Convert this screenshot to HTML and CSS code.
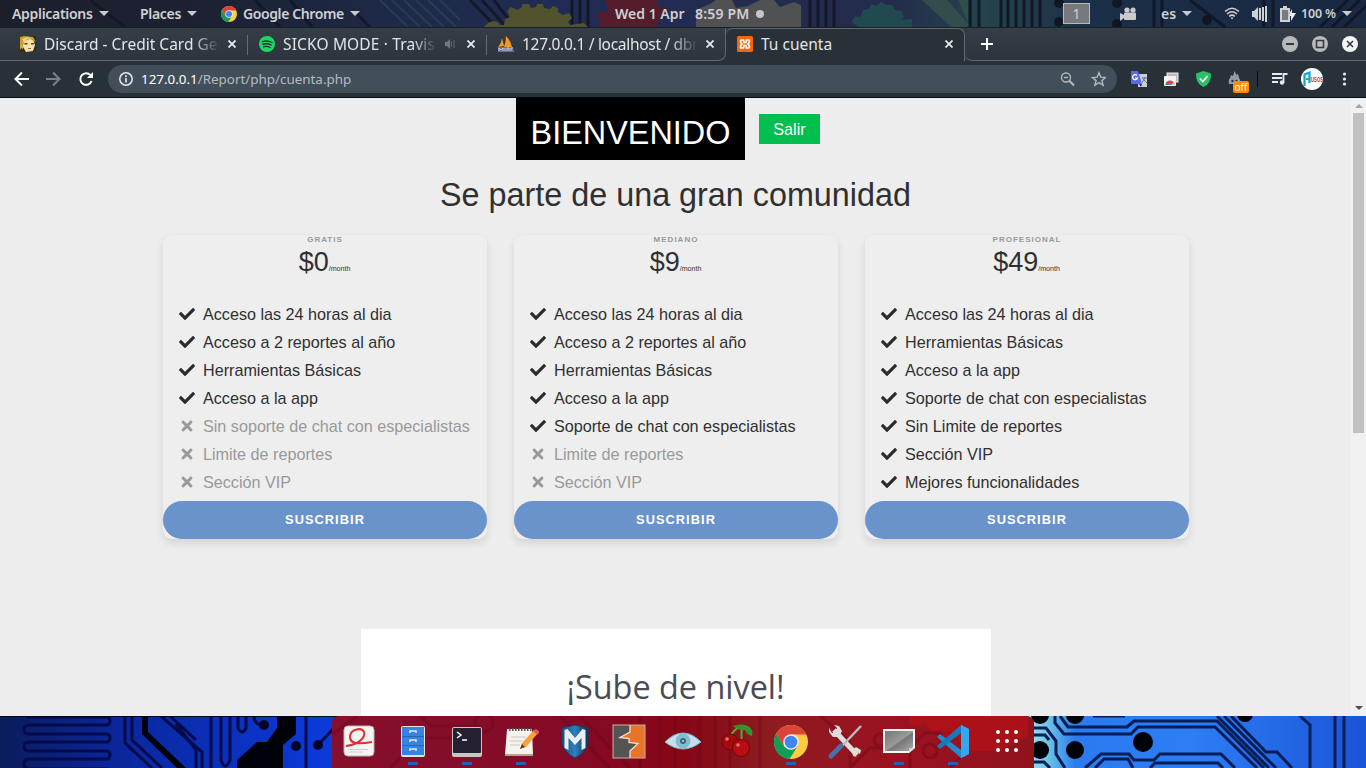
FILE: index.html
```html
<!DOCTYPE html>
<html lang="es">
<head>
<meta charset="utf-8">
<title>Tu cuenta</title>
<link rel="stylesheet" href="styles.css">
</head>
<body>
<svg class="defs" width="0" height="0">
  <defs>
    <symbol id="check" viewBox="0 0 512 512"><path d="M173.9 439.4L7.5 273c-10-10-10-26.200 0-36.200l36.200-36.200c10-10 26.200-10 36.200 0L192 312.700 432.100 72.600c10-10 26.200-10 36.200 0l36.200 36.200c10 10 10 26.200 0 36.200L210.100 439.400c-10 10-26.200 10-36.200 0z"/></symbol>
    <symbol id="times" viewBox="0 0 352 512"><path d="M242.700 256l100.100-100.100c12.300-12.300 12.300-32.200 0-44.500l-22.200-22.200c-12.300-12.300-32.200-12.300-44.500 0L176 189.300 75.900 89.200c-12.300-12.300-32.200-12.300-44.500 0L9.200 111.400c-12.300 12.300-12.300 32.200 0 44.500L109.300 256 9.200 356.100c-12.300 12.300-12.300 32.200 0 44.500l22.200 22.200c12.300 12.300 32.200 12.300 44.500 0L176 322.700l100.100 100.100c12.300 12.300 32.200 12.300 44.500 0l22.200-22.200c12.300-12.300 12.300-32.200 0-44.500z"/></symbol>
    <symbol id="x" viewBox="0 0 8 8"><path d="M.5.5l7 7M7.500.5l-7 7" stroke="currentColor" stroke-width="1.700"/></symbol>
    <symbol id="chrome" viewBox="0 0 48 48">
      <circle cx="24" cy="24" r="24" fill="#fc4"/>
      <path d="M3.200 12A24 24 0 0 1 44.800 12L46 13.500H24L13.500 30z" fill="#db4437"/>
      <path d="M3.200 12A24 24 0 0 0 22 48L33.500 29.500 24 34 13.600 30z" fill="#0f9d58"/>
      <circle cx="24" cy="24" r="11" fill="#f1f1f1"/><circle cx="24" cy="24" r="9" fill="#4285f4"/>
    </symbol>
  </defs>
</svg>

<header class="topbar">
  <svg class="wall" width="1366" height="27" viewBox="0 0 1366 27">
    <defs><linearGradient id="tb"><stop offset="0" stop-color="#1c1f2b"/><stop offset=".15" stop-color="#1c2133"/><stop offset=".3" stop-color="#1d2a49"/><stop offset=".42" stop-color="#222b55"/><stop offset=".65" stop-color="#242b4b"/><stop offset=".72" stop-color="#25434c"/><stop offset=".8" stop-color="#1c2f48"/><stop offset="1" stop-color="#182842"/></linearGradient></defs>
    <rect width="1366" height="27" fill="url(#tb)"/>
    <g fill="none" stroke="#141927" stroke-width="3"><path d="M90 0l35 27M255 0l25 27M290 0l22 27M355 12l15 15M470 0l26 27M482 0l24 27M494 0l20 27M572 0v27M580 0v27M588 0v27M810 0v27M818 0v27M826 0v27M834 0v27"/></g>
    <g fill="none" stroke="#294b53" stroke-width="2" opacity=".6"><path d="M380 0l28 27M392 0l28 27M404 0l28 27M416 0l28 27M428 0l28 27M440 0l20 20"/></g>
    <path d="M484 27q6-8 14-5l2 3h4l1-6 5-2-3-6 4-4 6 3 5-3v-3h7l2 4 5-1 1-3h6l1 4 6 1 3-3 5 2v4l5 3 6-2 3 5-4 4 2 3 14-2 4 4z" fill="#50532e"/>
    <path d="M598 27l3-6-4-5 4-5 6 1V5l-3-5h53l1 6 7 2-1 6-5 2 1 5-5 6z" fill="#551d2b"/>
    <path d="M696 27V10l14-6 6-4h16l4 8 12-2 12-6h14l6 7 14-5 7 3v22z" fill="#505153"/>
    <path d="M858 27l-6-5 3-6 5 1 3-7 6-1 2-5 5 2 5-4 6 3 5 0 3 5 6 1 3 6-2 3 10-1v8z" fill="#204a50"/>
    <path d="M922 0h25l24 27h-20zM958 0h12v27z" fill="#324e4c"/>
    <g stroke="#111827" stroke-width="3"><path d="M970 0v27M979 0v27M1001 0v27M1008 0v27M1016 0v27M1024 0v27M1032 0v27M1040 0v27M1154 0v27M1162 0v27M1190 0l35 27M1264 0v27M1273 0v27M1320 27l28-27M1332 27l28-27M1344 27l22-21"/></g>
    <g fill="#111722"><circle cx="1059" cy="3" r="5"/><circle cx="1059" cy="22" r="5"/><circle cx="1117" cy="3" r="5"/><circle cx="1117" cy="24" r="5"/><circle cx="1207" cy="20" r="5"/></g>
  </svg>
  <span class="menu m-apps"><span class="t">Applications</span><i></i></span>
  <span class="menu m-places"><span class="t">Places</span><i></i></span>
  <span class="menu m-chrome"><svg width="16" height="16"><use href="#chrome"/></svg><span class="t">Google Chrome</span><i></i></span>
  <span class="clock"><span>Wed 1 Apr</span><span>8:59 PM</span><b></b></span>
  <span class="tray">
    <span class="ws">1</span>
    <svg class="cam" width="16" height="14" viewBox="0 0 16 14" fill="#c9cbcc"><circle cx="7" cy="3" r="2.600"/><circle cx="13" cy="3" r="2.600"/><rect x="4" y="5.500" width="12" height="7.500" rx="1"/><path d="M0 6l4 2v3l-4 3z"/></svg>
    <span class="menu lang"><span class="t">es</span><i></i></span>
    <svg class="wifi" width="16" height="13" viewBox="0 0 16 13" fill="none" stroke="#d0d1d2" stroke-width="1.600"><path d="M1 4.500Q8-2 15 4.500"/><path d="M3 7Q8 2.500 13 7"/><path d="M5.200 9.300Q8 7 10.800 9.300"/><path d="M6.500 10.500h3L8 12.500z" fill="#d0d1d2" stroke="none"/></svg>
    <svg class="vol" width="16" height="16" viewBox="0 0 16 16"><path d="M0 5h2l4-4v14l-4-4H0zM7 2h2v12H7zM10 1h2v14h-2zM13 0h2v16h-2z" fill="#cfd0d1"/></svg>
    <svg class="bat" width="17" height="16" viewBox="0 0 17 16"><path d="M3 0h4v2h3v4l-2 4 2 0v6H0V2h3z" fill="#cfd0d1"/><path d="M2 4h6v10H2z" fill="#777b80"/><path d="M12 3v4h4l-5 8v-5H8z" fill="#eee"/></svg>
    <span class="menu pct"><span class="t">100 %</span><i></i></span>
  </span>
</header>

<section class="tabs">
  <div class="tab"><svg class="fav" width="16" height="16" viewBox="0 0 16 16"><path d="M0 0h16v16H0z" fill="#3a2a14"/><path d="M3 4l4-3 6 2 2 6-2 6-7 1-3-5z" fill="#f4e3a8"/><path d="M0 1l4-1 9 1 3 5-2-1-4-2-5 2-3 6-2 3z" fill="#c99c38"/><path d="M2 3l5-2 5 1-5 1-3 4zM1 8l2 3-1 3z" fill="#ecd27a"/><path d="M4.500 7h3v1.500h-3zM11 7h3v1.500h-3z" fill="#59401c"/><path d="M8 12.500h3" stroke="#9a6845"/></svg><span class="title fade">Discard - Credit Card Gen</span><svg class="close" width="8" height="8"><use href="#x"/></svg></div>
  <div class="tab"><svg class="fav" width="16" height="16" viewBox="0 0 16 16"><circle cx="8" cy="8" r="8" fill="#1ed760"/><path d="M3.500 5.600q5-1.500 9.500 1M4 8.200q4.500-1.200 8 .9M4.500 10.700q3.500-.9 6.500.8" fill="none" stroke="#23332b" stroke-width="1.400" stroke-linecap="round"/></svg><span class="title fade short">SICKO MODE · Travis</span><svg class="spk" width="10" height="10" viewBox="0 0 10 10"><path d="M0 3h2l3-3v10L2 7H0z" fill="#747980"/><path d="M6.500 2v6M9 1v8" stroke="#60666d"/></svg><svg class="close" width="8" height="8"><use href="#x"/></svg></div>
  <div class="tab nosep"><svg class="fav" width="16" height="16" viewBox="0 0 16 16"><path d="M0 11q3-3 4-9l2 8zM6 11Q8 6 8 0q5 5 6 11z" fill="#f29a1d"/><path d="M0 11h15l1 5H0z" fill="#6d6b9c"/><path d="M1 15v-3l2 2 2-2v3M7 12v3M9 15v-3h2v3M13 15v-3h2" stroke="#ddd" fill="none" stroke-width=".8"/></svg><span class="title fade tight">127.0.0.1 / localhost / dbr</span><svg class="close" width="8" height="8"><use href="#x"/></svg></div>
  <div class="tab active"><svg class="fav" width="16" height="16" viewBox="0 0 16 16"><rect width="16" height="16" rx="1.500" fill="#f4670b"/><path d="M6.500 4H4.500Q3.500 4 3.500 5.200T5 8Q3.500 9 3.500 10.800T4.500 12H6.500L7 9.500H9L9.500 12h2q1 0 1-1.200T11 8q1.500-1.600 1.500-2.800T11.500 4h-2L9 6.500H7z" fill="none" stroke="#fff" stroke-width="1.700"/></svg><span class="title">Tu cuenta</span><svg class="close" width="8" height="8"><use href="#x"/></svg></div>
  <div class="strip">
    <svg class="plus" width="12" height="12" viewBox="0 0 12 12"><path d="M6 0v12M0 6h12" stroke="#fff" stroke-width="2"/></svg>
    <svg class="wbtns" width="76" height="16" viewBox="0 0 76 16"><circle cx="8" cy="8" r="8" fill="#b8b9ba"/><path d="M4 8h8" stroke="#2d363e" stroke-width="2"/><circle cx="38" cy="8" r="8" fill="#b8b9ba"/><path d="M34.500 4.500h7v7h-7z" stroke="#2d363e" stroke-width="1.500" fill="none"/><circle cx="68" cy="8" r="8" fill="#f4f4f4"/><path d="M65 5l6 6M71 5l-6 6" stroke="#2d363e" stroke-width="1.500"/></svg>
  </div>
</section>

<section class="toolbar">
  <svg class="nav" width="84" height="16" viewBox="0 0 84 16" fill="none" stroke-width="2"><path d="M15 8H2M8 1.500L1.500 8 8 14.500" stroke="#fff"/><path d="M32 8h13M39 1.500L45.500 8 39 14.500" stroke="#7b8187"/><path d="M76.500 4.200A5.800 5.800 0 1 0 77.600 10" stroke="#fff"/><path d="M79 1v6h-6z" fill="#fff"/></svg>
  <div class="omni">
    <svg width="14" height="14" viewBox="0 0 14 14"><circle cx="7" cy="7" r="6.200" fill="none" stroke="#e8eaed" stroke-width="1.500"/><path d="M7 6v4.500M7 3.300v1.700" stroke="#e8eaed" stroke-width="1.600"/></svg>
    <span class="url"><b>127.0.0.1</b>/Report/php/cuenta.php</span>
    <svg class="omi" width="46" height="16" viewBox="0 0 46 16" fill="none" stroke="#b4b9bf" stroke-width="1.400"><circle cx="6" cy="6.500" r="4.500"/><path d="M9.300 9.800L14 14.500" stroke-width="2"/><path d="M4 6.500h4"/><path d="M39 1.700l1.800 4.500 4.700.3-3.600 3.100 1.200 4.700-4.100-2.600-4.100 2.600 1.200-4.700-3.600-3.100 4.700-.3z"/></svg>
  </div>
  <svg class="ext" width="236" height="28" viewBox="1130 65 236 28">
    <rect x="1138" y="74" width="9" height="13" fill="#c8ced3"/><path d="M1131 71h7l4 13h-10q-1 0-1-1z" fill="#5b69e8"/><path d="M1139 84h3l-1 3z" fill="#3b1fb5"/><path d="M1137 75.500a2.500 2.500 0 1 0 .5 2.500h-2.500" fill="none" stroke="#fff" stroke-width="1.200"/><path d="M1142 78h5M1144.500 77v1q-.5 3-2.500 4M1143 79l4 4" stroke="#5d7380" fill="none"/>
    <rect x="1167" y="73" width="11" height="9" fill="#bbb" stroke="#eee"/><rect x="1164" y="76" width="12" height="10" rx="1" fill="#f3f3f3"/><path d="M1165.500 85a4.500 4.500 0 0 1 9 0z" fill="#db4437"/><path d="M1165.500 85l1-3 2 3z" fill="#19a15f"/><path d="M1171.500 85l2-3 1 3z" fill="#fc4"/><path d="M1168 85a2 2 0 0 1 4 0z" fill="#4285f4"/>
    <path d="M1203.500 71l7.500 2.500q.5 10-7.500 13.500-8-3.500-7.500-13.500z" fill="#28c068"/><path d="M1199.800 78.500l3 3 4.800-5.500" fill="none" stroke="#fff" stroke-width="1.700"/>
    <path d="M1229 84q-1-4 1-6l1-3 2 1 1.500-5 2 4 1.500-1 1 4q2 2 1 6z" fill="#999c9f"/><circle cx="1232.500" cy="81" r="1.200" fill="#29323a"/><circle cx="1236.500" cy="81" r="1.200" fill="#29323a"/>
    <rect x="1233" y="81" width="16" height="12" rx="2" fill="#ff8a00"/><text x="1241" y="91" text-anchor="middle" class="off">off</text>
    <path d="M1257.500 71v16" stroke="#0b0e11"/>
    <path d="M1272 74h10M1272 78h10M1272 82h6" stroke="#e8eaed" stroke-width="1.800"/><circle cx="1282" cy="82.500" r="2.200" fill="#e8eaed"/><path d="M1283.500 83v-9h4" stroke="#e8eaed" stroke-width="1.800" fill="none"/>
    <circle cx="1312" cy="79" r="11" fill="#fff"/><path d="M1304.500 86V74.500l5-2V83" fill="none" stroke="#12a0dc" stroke-width="2.200"/><path d="M1309 79h-3" stroke="#29b36b" stroke-width="2"/><text x="1311" y="82" class="usos" textLength="12" lengthAdjust="spacingAndGlyphs">USOS</text>
    <g fill="#e8eaed"><circle cx="1344.500" cy="74" r="1.600"/><circle cx="1344.500" cy="79" r="1.600"/><circle cx="1344.500" cy="84" r="1.600"/></g>
  </svg>
</section>

<div class="view">
  <main class="page">
    <div class="welcome"><h1>BIENVENIDO</h1><a class="exit">Salir</a></div>
    <h2>Se parte de una gran comunidad</h2>
    <div class="plans">
      <article class="plan">
        <h5>GRATIS</h5><h6>$0<small>/month</small></h6>
        <ul>
          <li><svg><use href="#check"/></svg>Acceso las 24 horas al dia</li>
          <li><svg><use href="#check"/></svg>Acceso a 2 reportes al año</li>
          <li><svg><use href="#check"/></svg>Herramientas Básicas</li>
          <li><svg><use href="#check"/></svg>Acceso a la app</li>
          <li class="no"><svg><use href="#times"/></svg>Sin soporte de chat con especialistas</li>
          <li class="no"><svg><use href="#times"/></svg>Limite de reportes</li>
          <li class="no"><svg><use href="#times"/></svg>Sección VIP</li>
        </ul>
        <a class="buy">SUSCRIBIR</a>
      </article>
      <article class="plan">
        <h5>MEDIANO</h5><h6>$9<small>/month</small></h6>
        <ul>
          <li><svg><use href="#check"/></svg>Acceso las 24 horas al dia</li>
          <li><svg><use href="#check"/></svg>Acceso a 2 reportes al año</li>
          <li><svg><use href="#check"/></svg>Herramientas Básicas</li>
          <li><svg><use href="#check"/></svg>Acceso a la app</li>
          <li><svg><use href="#check"/></svg>Soporte de chat con especialistas</li>
          <li class="no"><svg><use href="#times"/></svg>Limite de reportes</li>
          <li class="no"><svg><use href="#times"/></svg>Sección VIP</li>
        </ul>
        <a class="buy">SUSCRIBIR</a>
      </article>
      <article class="plan">
        <h5>PROFESIONAL</h5><h6>$49<small>/month</small></h6>
        <ul>
          <li><svg><use href="#check"/></svg>Acceso las 24 horas al dia</li>
          <li><svg><use href="#check"/></svg>Herramientas Básicas</li>
          <li><svg><use href="#check"/></svg>Acceso a la app</li>
          <li><svg><use href="#check"/></svg>Soporte de chat con especialistas</li>
          <li><svg><use href="#check"/></svg>Sin Limite de reportes</li>
          <li><svg><use href="#check"/></svg>Sección VIP</li>
          <li><svg><use href="#check"/></svg>Mejores funcionalidades</li>
        </ul>
        <a class="buy">SUSCRIBIR</a>
      </article>
    </div>
    <section class="level"><h3>¡Sube de nivel!</h3></section>
  </main>
  <div class="scroll"><i class="up"></i><i class="thumb"></i><i class="down"></i></div>
</div>

<footer class="desk">
  <svg class="wall" width="1366" height="52" viewBox="0 716 1366 52">
    <defs>
      <linearGradient id="dl"><stop offset="0" stop-color="#0a1c5a"/><stop offset=".3" stop-color="#0a2596"/><stop offset="1" stop-color="#0b3ce0"/></linearGradient>
      <linearGradient id="dr"><stop offset="0" stop-color="#b8f3f0"/><stop offset=".08" stop-color="#6cc5e8"/><stop offset=".16" stop-color="#2b7af0"/><stop offset=".5" stop-color="#2d7df5"/><stop offset="1" stop-color="#1a54d8"/></linearGradient>
      <linearGradient id="dk"><stop offset="0" stop-color="#850f2c"/><stop offset=".35" stop-color="#840b26"/><stop offset=".5" stop-color="#870616"/><stop offset=".62" stop-color="#8c1c20"/><stop offset=".8" stop-color="#9b1221"/><stop offset="1" stop-color="#90131c"/></linearGradient>
      <linearGradient id="shield"><stop stop-color="#164f87"/><stop offset=".5" stop-color="#2f7fbc"/><stop offset="1" stop-color="#0d3258"/></linearGradient>
      <linearGradient id="grey" x2="1" y2="1"><stop stop-color="#777"/><stop offset=".5" stop-color="#999"/><stop offset=".55" stop-color="#777"/><stop offset="1" stop-color="#aaa"/></linearGradient>
    </defs>
    <rect y="716" width="345" height="52" fill="url(#dl)"/><rect x="1020" y="716" width="346" height="52" fill="url(#dr)"/>
    <g fill="none" stroke="#040a4a" stroke-width="3">
      <path d="M26 717h80q4 0 4 4t-4 4H29q-5 0-5 4.500t5 4.500h77q4 0 4 4t-4 4H29q-5 0-5 4.500t5 4.500h77q4 0 4 4t-4 4H29q-5 0-5 5t5 5h80"/>
      <path d="M125 716v27l27 25M132 716v24l30 28M161 716l41 36v16M170 716l26 24M176 724l20 26v18"/>
      <path d="M211 716v52M221 716v44q4 12 9 0v-44M238 716v12q4 8 8 0v-12M254 716q0 8 8 9M306 716v52M318 745l16-17"/>
    </g>
    <path d="M142 716h6v16l38 36h-9l-35-34zM277 716h19v18l-13 11v23h-46v-8l20-18h10l10-14z" fill="#000209"/>
    <g fill="#010629"><circle cx="264" cy="725" r="5"/><circle cx="296" cy="746" r="5"/><circle cx="318" cy="745" r="5"/></g>
    <path d="M0 716.500h1020" stroke="#020820"/>
    <g fill="none" stroke="#071d55" stroke-width="3">
      <path d="M1055 716v7l9 11h67l7-7h77l42 41M1060 716l8 11h59l7-6h83l47 47M1093 716h32M1085 768l16-14h28l5 6h20l6-6h61l14 14M1095 768l9-9h24l5 9M1150 768l5-5h63l5 5"/>
      <path d="M1217 716l52 52M1224 716l52 52M1231 716l35 36h11l15 16M1300 716l10 9v43M1335 716v52M1344 716v52"/>
      <path d="M1034 728h12l10 13v13l9 14M1034 735h11l4 5M1034 762h10l6 6"/>
    </g>
    <g fill="#000208"><circle cx="1040" cy="715" r="9"/><circle cx="1075" cy="715" r="9"/><circle cx="1040" cy="750" r="9"/><circle cx="1075" cy="750" r="9"/><circle cx="1143" cy="742" r="10"/><circle cx="1245" cy="714" r="8"/></g>
    <path d="M332 768v-44q0-8 8-8h686q8 0 8 8v44z" fill="url(#dk)"/>
    <g fill="none" stroke="#6a0618" stroke-width="3" opacity=".4"><path d="M332 735l25-19M390 768l30-30h55M420 716l12 10h50M560 716l50 52M580 716l50 52M640 716v52M660 716v52M675 716v52M700 716v52M715 716v52M730 716v52M760 716v52M820 716l30 25v27M850 768l20-20h25M910 768v-20l15-15h25M950 768l15-15"/><circle cx="484" cy="723" r="9"/><circle cx="880" cy="740" r="6"/><circle cx="930" cy="751" r="7"/></g>
    <path d="M910 716h118v20l-30 15h-32l-9-14-12 2-5-9-8 2-7-8-15 2z" fill="#bf1014" opacity=".55"/>
  </svg>
  <div class="dock">
    <span><svg viewBox="0 0 36 36"><rect x="3" y="3" width="30" height="30" rx="4" fill="#f4f4f3" stroke="#bdb7b5"/><path d="M5 23C16 22 25 15 23 9 21 4 10 6 9 13 8 22 20 21 31 19" fill="none" stroke="#db3035" stroke-width="2"/><path d="M7 26.500h20M7 29h15" stroke="#ccc"/></svg></span>
    <span class="run"><svg viewBox="0 0 36 36"><rect x="6" y="3" width="24" height="31" rx="2" fill="#e7e2dd"/><rect x="7" y="4" width="22" height="28" fill="#3584e4"/><path d="M7 13.500h22M7 22.500h22" stroke="#2266bb"/><path d="M15 10v-2h6v2M15 19v-2h6v2M15 28v-2h6v2" fill="none" stroke="#e8e8e8" stroke-width="1.500"/></svg></span>
    <span class="run"><svg viewBox="0 0 36 36"><rect x="3" y="4" width="30" height="30" rx="2" fill="#c9c5c0"/><rect x="4" y="5" width="28" height="25" rx="1" fill="#241f31"/><path d="M8 9l4 3-4 3M13 17h5" fill="none" stroke="#fff" stroke-width="1.500"/></svg></span>
    <span class="run"><svg viewBox="0 0 36 36"><path d="M4 6h25l1 26H2z" fill="#f5f3ec"/><path d="M2 31h28v2H2z" fill="#aaa69e"/><path d="M6 6.500h23" stroke="#555" stroke-width="3" stroke-dasharray="1.500 1.500"/><path d="M8 14h15M7 18h12M7 22h10" stroke="#c8c8c8"/><path d="M17 26l2-6L31 7l4 3-12 14z" fill="#f6a43a"/><path d="M30 8l3-2 4 3-3 3z" fill="#e25a52"/><path d="M17 26l2-5 3 3z" fill="#53412d"/></svg></span>
    <span><svg viewBox="0 0 36 36"><path d="M18 2l13 3v16q-3 9-13 14Q8 30 5 21V5z" fill="url(#shield)" stroke="#123f6d"/><path d="M7.500 25V7l3-1L18 15l7.500-9 3 1v18l-4 2V15L18 22l-6.500-7v12z" fill="#e9eff5"/></svg></span>
    <span><svg viewBox="0 0 36 36"><rect x="2" y="2" width="32" height="33" fill="#545454"/><path d="M34 2H19v7L9 14.500l9 1v4l9 1L19 28v7h15z" fill="#e87428"/><path d="M19 2v7L9 14.500l9 1v4l9 1L19 28v7" fill="none" stroke="#f5ded0" stroke-width="1.300"/><rect x="2" y="2" width="32" height="33" fill="none" stroke="#d0aea1"/></svg></span>
    <span><svg viewBox="0 0 36 36"><path d="M0 19Q9 10 18 10t18 9Q27 26 18 26T0 19z" fill="#c3e0ec" stroke="#79b5cc"/><circle cx="18" cy="18" r="7.500" fill="#81bcd0"/><circle cx="18" cy="18" r="3" fill="#3c6874"/><circle cx="18" cy="18" r="1" fill="#bed8dd"/></svg></span>
    <span><svg viewBox="0 0 36 36"><path d="M9 17Q15 5 23 3M23 20Q22 10 23 3" fill="none" stroke="#5ba82e" stroke-width="2"/><path d="M14 3q9-3 15 0 6 4 4 10-5-1-7-6-6 1-12-4z" fill="#37912c"/><circle cx="11" cy="19" r="8" fill="#a30a10" stroke="#74060b"/><circle cx="22" cy="25" r="8.500" fill="#b80d13" stroke="#74060b"/><circle cx="8" cy="16" r="1.800" fill="#e8706c"/><circle cx="19" cy="22" r="1.800" fill="#e8706c"/></svg></span>
    <span class="run"><svg viewBox="0 0 36 36"><use href="#chrome" x="1" y="2" width="34" height="34"/></svg></span>
    <span><svg viewBox="0 0 36 36"><path d="M7 7l23 25" stroke="#dedddc" stroke-width="5"/><path d="M2 5l3 5 4 0 1-5-3-3 5 1 3 5-3 6-6 0-4-5zM25 27l4-3 5 3-1 4-4-3-1 5 3 1-5-1z" fill="#deddda"/><path d="M34 3L15 23" stroke="#b9bbc0" stroke-width="2.500"/><path d="M4 33l10-10" stroke="#4771aa" stroke-width="5" stroke-linecap="round"/></svg></span>
    <span class="run"><svg viewBox="0 0 36 36"><path d="M2 6h32v19l-6 5H2z" fill="#f5f5f2"/><path d="M4 8h28v16l-4 4H4z" fill="url(#grey)"/><path d="M28 30v-5h6z" fill="#d5d5cf"/></svg></span>
    <span class="run"><svg viewBox="0 0 36 36"><path d="M26 2l8 4v25l-8 4L2 14l3-3 21 16z" fill="#218ccd"/><path d="M26 2v8L5 26l-3-3z" fill="#147abd"/><path d="M26 2l8 4v25l-8 4z" fill="#34a7ef"/></svg></span>
    <span><svg viewBox="0 0 36 36"><path d="M9 9h.01M18 9h.01M27 9h.01M9 18h.01M18 18h.01M27 18h.01M9 27h.01M18 27h.01M27 27h.01" stroke="#fff" stroke-width="4" stroke-linecap="round"/></svg></span>
  </div>
</footer>
</body>
</html>
```
FILE: styles.css
```css
* { box-sizing: border-box; }
body { margin: 0; width: 1366px; height: 768px; overflow: hidden; display: flex; flex-direction: column; font-family: "Noto Sans", "Open Sans", sans-serif; background: #ededed; }
h1, h2, h3, h5, h6, ul { margin: 0; padding: 0; font-weight: 400; list-style: none; }
svg { flex: none; display: block; }
.defs { position: absolute; }
.wall { position: absolute; left: 0; top: 0; }

/* desktop bar */
.topbar { position: relative; height: 27px; flex: none; display: flex; align-items: center; color: #cfd0d2; font-size: 14px; font-weight: 600; }
.topbar > span { position: relative; }
.menu { display: flex; align-items: center; gap: 6px; white-space: nowrap; }
.menu i { border: 5px solid transparent; border-top-color: #c9cacc; border-bottom: 0; }
.m-apps { margin-left: 12px; width: 128px; }
.m-places { width: 81px; }
.m-chrome { width: 394px; }
.clock { display: flex; align-items: center; width: 160px; white-space: nowrap; }
.clock span:first-child { width: 80px; }
.clock span:nth-child(2) { width: 61px; letter-spacing: .2px; }
.clock b { width: 8px; height: 8px; border-radius: 50%; background: #c5c6c8; }
.m-apps, .m-places { letter-spacing: -.3px; }
.clock { letter-spacing: 0; }
.m-chrome { letter-spacing: -.4px; }
.tray { display: flex; align-items: center; flex: 1; margin-left: 288px; }
.ws { width: 27px; height: 21px; border: 1px solid #bbb; background: #77797c; line-height: 19px; text-align: center; font-weight: 400; }
.cam { margin-left: 30px; }
.lang { margin-left: 25px; width: 63px; }
.vol { margin-left: 12px; }
.bat { margin-left: 12px; }
.pct { margin-left: 4px; font-size: 12.500px; letter-spacing: -.2px; }

/* tab strip */
.tabs { height: 34px; flex: none; display: flex; background: linear-gradient(#353e47, #2c343c); border-top: 1px solid #1a1f24; }
.tab { position: relative; width: 239px; height: 33px; display: flex; align-items: center; padding-left: 11px; color: #e4e5e7; border-bottom: 1px solid #626970; }
.tab:first-child { width: 248px; padding-left: 20px; }
.tab:not(.active):not(.nosep)::after { content: ""; position: absolute; right: 0; top: 7px; width: 1px; height: 20px; background: #666c73; }
.title { margin-left: 8px; width: 176px; font-size: 15.500px; white-space: nowrap; overflow: hidden; line-height: 24px; }
.short { width: 154px; letter-spacing: .15px; }
.tight { letter-spacing: -.3px; }
.fade { -webkit-mask-image: linear-gradient(90deg, #000 84%, transparent); mask-image: linear-gradient(90deg, #000 84%, transparent); }
.close { margin-left: 8px; color: #eee; }
.spk { margin-left: 8px; }
.spk + .close { margin-left: 12px; }
.nosep { border-bottom-right-radius: 8px; border-right: 1px solid #626970; }
.active { background: #293138; border: 1px solid #626970; border-bottom: 0; border-left: 0; border-radius: 7px 7px 0 0; padding-bottom: 2px; }
.active .close { margin-left: 8px; }
.strip { flex: 1; height: 33px; display: flex; align-items: center; justify-content: space-between; padding: 0 8px 0 16px; border-bottom: 1px solid #626970; border-bottom-left-radius: 7px; }

/* navigation bar */
.toolbar { height: 37px; flex: none; display: flex; align-items: center; background: #293138; border-bottom: 1px solid #07090b; padding-left: 14px; }
.omni { margin-left: 10px; width: 1009px; height: 28px; border-radius: 14px; background: #434e5b; display: flex; align-items: center; padding-left: 11px; }
.url { margin-left: 8px; font-size: 13.400px; color: #b6bbc2; flex: 1; }
.url b { font-weight: 400; color: #fff; }
.omi { margin-right: 11px; }
.ext { margin-left: 13px; }
.off { font: 10px "Noto Sans", sans-serif; fill: #fff; }
.usos { font: bold 7px "Liberation Sans", sans-serif; fill: #e2203b; }

/* page */
.view { height: 618px; flex: none; display: flex; overflow: hidden; font-family: "Liberation Sans", Arial, sans-serif; color: #303030; }
.page { width: 1351px; display: flex; flex-direction: column; align-items: center; }
.welcome { display: flex; gap: 14px; align-items: flex-start; margin-right: 16px; }
h1 { width: 229px; height: 62px; background: #000; color: #fff; font-size: 32.400px; line-height: 70px; text-align: center; padding-left: 1px; }
.exit { margin-top: 16px; width: 61px; height: 30px; background: #00bf4f; color: #fff; font-size: 16.200px; line-height: 31px; text-align: center; padding-left: 1px; }
h2 { margin-top: 15px; height: 60px; font-size: 32.350px; line-height: 40px; }
.plans { display: flex; gap: 27px; padding-left: 1px; }
.plan { width: 324px; height: 304px; border-radius: 9px; background: #eee; box-shadow: 0 4px 8px rgba(0,0,0,.11); display: flex; flex-direction: column; }
h5 { font-size: 8px; line-height: 9px; font-weight: 700; letter-spacing: 1px; color: #999; text-align: center; height: 9px; }
h6 { font-size: 27px; line-height: 36px; text-align: center; height: 56px; padding-right: 1px; }
small { font-size: 7.100px; }
ul { height: 201px; padding-left: 16px; }
li { height: 28px; display: flex; align-items: center; font-size: 16.160px; white-space: nowrap; }
li svg { width: 16px; height: 16px; margin: 0 8px 0 0; fill: #2b2b2b; }
.no { color: #999; }
.no svg { fill: #999; }
.buy { height: 38px; border-radius: 19px; background: #6a93cb; color: #fff; font-size: 12.800px; font-weight: 700; letter-spacing: 1.050px; text-align: center; line-height: 38px; }
.level { margin-top: 90px; width: 630px; height: 87px; flex: none; background: #fff; text-align: center; }
h3 { font: 32.400px/44px "Open Sans", sans-serif; color: #4b4b55; padding-top: 35px; }
.scroll { width: 15px; height: 618px; background: #f1f1f1; display: flex; flex-direction: column; align-items: center; padding: 6px 0; }
.up { border: 4px solid transparent; border-bottom-color: #a3a3a3; border-top: 0; }
.thumb { width: 11px; height: 320px; margin-top: 5px; background: #c1c1c1; }
.down { margin-top: auto; border: 4px solid transparent; border-top-color: #505050; border-bottom: 0; }

/* dock */
.desk { position: relative; height: 52px; flex: none; }
.dock { position: relative; display: flex; padding-left: 332px; }
.dock span { width: 54px; height: 52px; padding: 7px 0 0 9px; display: flex; flex-direction: column; }
.dock svg { width: 36px; height: 36px; }
.run::after { content: ""; width: 10px; height: 3px; background: #2164ad; margin: 3px 0 0 13px; }
```
